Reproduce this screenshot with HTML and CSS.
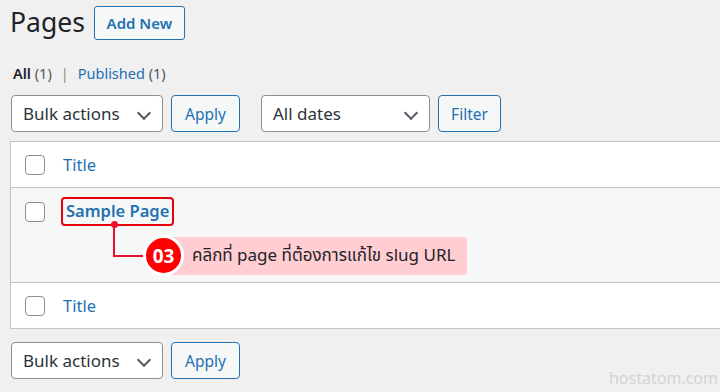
FILE: index.html
```html
<!DOCTYPE html>
<html lang="en">
<head>
    <meta charset="UTF-8">
    <title>Pages</title>
    <link rel="stylesheet" href="styles.css">
</head>
<body>
    <div class="wrap">
        <div class="heading">
            <h1>Pages</h1>
            <a class="page-action">Add New</a>
        </div>

        <ul class="subsubsub">
            <li><b>All</b> <span class="count">(1)</span></li>
            <li class="sep">|</li>
            <li><a>Published</a> <span class="count">(1)</span></li>
        </ul>

        <div class="tablenav">
            <div class="select bulk">Bulk actions <span class="caret"></span></div>
            <button class="btn apply">Apply</button>
            <div class="select dates">All dates <span class="caret"></span></div>
            <button class="btn filter">Filter</button>
        </div>

        <div class="list-table">
            <div class="row head">
                <span class="check"></span>
                <a class="col-title">Title</a>
            </div>
            <div class="row item">
                <span class="check"></span>
                <a class="row-title">Sample Page</a>

                <!-- annotation overlay -->
                <div class="note">
                    <span class="note-dot"></span>
                    <span class="note-line"></span>
                    <div class="note-label">
                        <span class="note-num">03</span>
                        <span class="note-text">คลิกที่ page ที่ต้องการแก้ไข slug URL</span>
                    </div>
                </div>
            </div>
            <div class="row foot">
                <span class="check"></span>
                <a class="col-title">Title</a>
            </div>
        </div>

        <div class="tablenav bottom">
            <div class="select bulk">Bulk actions <span class="caret"></span></div>
            <button class="btn apply">Apply</button>
        </div>
    </div>

    <div class="watermark">hostatom.com</div>
</body>
</html>
```

FILE: styles.css
```css
html, body {
    margin: 0;
    padding: 0;
    height: 100%;
    overflow: hidden;
}
body {
    background-color: #f0f0f1;
    color: #1d2327;
    font-family: "Noto Sans", "Noto Sans Thai", "Liberation Sans", sans-serif;
    position: relative;
}
.wrap {
    padding-left: 10px;
    margin-right: -20px;
}
.heading {
    display: flex;
    align-items: center;
    gap: 9px;
    height: 46px;
}
h1 {
    margin: 0;
    font-size: 26.5px;
    font-weight: 400;
    line-height: 46px;
    margin-top: -2px;
}
.page-action {
    box-sizing: border-box;
    width: 91px;
    height: 34px;
    display: flex;
    align-items: center;
    justify-content: center;
    border: 1px solid #2271b1;
    border-radius: 3px;
    background-color: #f6f7f7;
    color: #2271b1;
    font-size: 15px;
    font-weight: 600;
}
.subsubsub {
    list-style: none;
    margin: 15px 0 0 3px;
    padding: 0;
    display: flex;
    gap: 6px;
    font-size: 14.5px;
    line-height: 24px;
    color: #50575e;
}
.subsubsub b {
    color: #1d2327;
    font-weight: 600;
}
.subsubsub a {
    color: #2271b1;
}
.subsubsub .sep {
    color: #a08870;
    padding: 0 3px;
}
.tablenav {
    display: flex;
    align-items: center;
    margin-top: 10px;
    height: 37px;
}
.select {
    box-sizing: border-box;
    height: 37px;
    border: 1px solid #8c8f94;
    border-radius: 4px;
    background-color: #fff;
    display: flex;
    align-items: center;
    padding-left: 11px;
    font-size: 17px;
    color: #2c3338;
    position: relative;
}
.select.bulk {
    width: 152px;
    margin-left: 1px;
}
.select.dates {
    width: 169px;
    margin-left: 21px;
}
.caret {
    position: absolute;
    right: 13px;
    top: 12px;
    width: 8px;
    height: 8px;
    border-right: 2px solid #50575e;
    border-bottom: 2px solid #50575e;
    transform: rotate(45deg);
}
.btn {
    box-sizing: border-box;
    height: 37px;
    padding: 0;
    margin-left: 8px;
    border: 1px solid #2271b1;
    border-radius: 4px;
    background-color: #f6f7f7;
    color: #2271b1;
    font-family: inherit;
    font-size: 15.5px;
}
.btn.apply {
    width: 69px;
}
.btn.filter {
    width: 63px;
}
.list-table {
    margin-top: 9px;
    border: 1px solid #c3c4c7;
    background-color: #fff;
}
.row {
    display: flex;
    align-items: center;
    height: 45px;
    padding-left: 14px;
    position: relative;
}
.row.item {
    height: 94px;
    align-items: flex-start;
    background-color: #f6f7f7;
    border-top: 1px solid #c3c4c7;
    border-bottom: 1px solid #c3c4c7;
}
.check {
    box-sizing: border-box;
    width: 20px;
    height: 20px;
    border: 1px solid #8c8f94;
    border-radius: 4px;
    background-color: #fff;
}
.row.item .check {
    margin-top: 14px;
}
.col-title {
    margin-left: 18px;
    font-size: 16.5px;
    color: #2271b1;
}
.row-title {
    margin-left: 16px;
    margin-top: 9px;
    padding: 0 3px 2px 3px;
    border: 2px solid #e8000b;
    border-radius: 4px;
    font-size: 16.5px;
    font-weight: 600;
    color: #2271b1;
}
.note {
    position: absolute;
    left: 0;
    top: 0;
}
.note-dot {
    position: absolute;
    left: 100px;
    top: 33px;
    width: 7px;
    height: 7px;
    border-radius: 50%;
    background-color: #e8102b;
}
.note-line {
    position: absolute;
    left: 102px;
    top: 37px;
    width: 36px;
    height: 30px;
    border-left: 2px solid #e8102b;
    border-bottom: 2px solid #e8102b;
}
.note-label {
    position: absolute;
    left: 132px;
    top: 47px;
    display: flex;
    align-items: center;
}
.note-num {
    box-sizing: border-box;
    width: 41px;
    height: 41px;
    border-radius: 50%;
    border: 3px solid #fff;
    background-color: #f00;
    color: #fff;
    font-weight: 700;
    font-size: 19px;
    display: flex;
    align-items: center;
    justify-content: center;
    position: relative;
    z-index: 1;
}
.note-text {
    margin-left: -14px;
    height: 38px;
    width: 297px;
    box-sizing: border-box;
    padding-left: 22px;
    display: flex;
    align-items: center;
    background-color: #ffcdd2;
    border-radius: 4px;
    font-size: 17px;
    color: #1d2327;
    white-space: nowrap;
}
.tablenav.bottom {
    margin-top: 13px;
}
.watermark {
    position: absolute;
    right: 2px;
    bottom: 3px;
    font-size: 16px;
    color: #d4d4d4;
}
```
